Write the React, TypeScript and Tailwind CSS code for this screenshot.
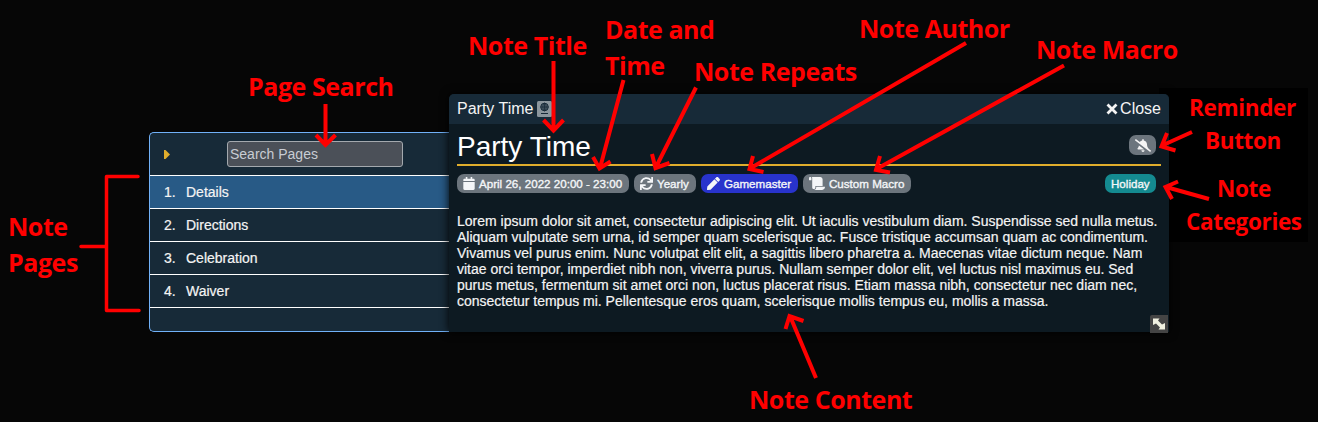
import { FaBellSlash, FaCalendar, FaPen, FaScroll, FaSync } from "react-icons/fa";

const pages = ["Details", "Directions", "Celebration", "Waiver"];

const content = [
  "Lorem ipsum dolor sit amet, consectetur adipiscing elit. Ut iaculis vestibulum diam. Suspendisse sed nulla metus.",
  "Aliquam vulputate sem urna, id semper quam scelerisque ac. Fusce tristique accumsan quam ac condimentum.",
  "Vivamus vel purus enim. Nunc volutpat elit elit, a sagittis libero pharetra a. Maecenas vitae dictum neque. Nam",
  "vitae orci tempor, imperdiet nibh non, viverra purus. Nullam semper dolor elit, vel luctus nisl maximus eu. Sed",
  "purus metus, fermentum sit amet orci non, luctus placerat risus. Etiam massa nibh, consectetur nec diam nec,",
  "consectetur tempus mi. Pellentesque eros quam, scelerisque mollis tempus eu, mollis a massa.",
];

const large = "text-[25px] tracking-[-0.45px]";
const small = "text-[22.5px] tracking-[-0.35px]";

const labels = [
  { text: "Page Search", at: "left-[248px] top-[74px]", size: large },
  { text: "Note Title", at: "left-[468px] top-[33px]", size: large },
  { text: "Date and", at: "left-[605px] top-[17px]", size: large },
  { text: "Time", at: "left-[605px] top-[53px]", size: large },
  { text: "Note Repeats", at: "left-[694px] top-[59px]", size: large },
  { text: "Note Author", at: "left-[859px] top-[16px]", size: large },
  { text: "Note Macro", at: "left-[1036px] top-[37px]", size: large },
  { text: "Reminder", at: "left-[1189px] top-[97px]", size: small },
  { text: "Button", at: "left-[1205px] top-[130px]", size: small },
  { text: "Note", at: "left-[1217px] top-[178px]", size: small },
  { text: "Categories", at: "left-[1186px] top-[211px]", size: small },
  { text: "Note", at: "left-[8px] top-[214px]", size: large },
  { text: "Pages", at: "left-[8px] top-[250px]", size: large },
  { text: "Note Content", at: "left-[749px] top-[387px]", size: large },
];

const arrows = [
  "M325.5 104V145M316 135l9.500 10 10-10",
  "M553.500 61V129M543.500 120l10 10.500 10-10.500",
  "M623.500 80 600 168M593 157l6.500 11.500 11-7",
  "M696 87.500 655.500 168M652 154l3.500 14 14-5",
  "M966 43 750 168.500M753 156l-3.500 13 14 3",
  "M1064 65.500 876.500 169M880 156l-4 14 14 2.500",
  "M1192 132 1161 146M1167 133l-5.500 13.500 14 4",
  "M1209 199 1166 187M1178 181.500l-12.500 5.500 6.500 12",
  "M816 378 790 316M785.500 329l4-13 14 5",
];

function Tag({ children, className }: { children: React.ReactNode; className: string }) {
  return (
    <span className={`flex h-[19px] items-center gap-[4px] rounded-[7px] whitespace-nowrap pl-[6px] text-[11.6px] leading-[19px] text-[#f4f6f8] [-webkit-text-stroke:0.35px_#f4f6f8] ${className}`}>
      {children}
    </span>
  );
}

export default function App() {
  return (
    <div className="relative h-[422px] w-[1318px] overflow-hidden bg-[#060606] font-['Liberation_Sans',Arial,sans-serif] text-[#f4f4f4]">
      <div className="absolute left-[1159px] top-[88px] h-[154px] w-[149px] bg-black" />

      <div className="relative flex items-end pl-[149px] pt-[94px]">
        <aside className="h-[200px] w-[300px] rounded-l-[5px] border border-r-0 border-[#71b1f8] bg-[#172a38]">
          <div className="flex h-[43px] items-center border-b border-white">
            <svg className="ml-[14px] h-[9px] w-[6px] fill-[#e0ad2c]" viewBox="0 0 6 9">
              <path d="M0 0h1.500L6 4.500 1.500 9H0z" />
            </svg>
            <input
              className="ml-[57px] h-[26px] w-[176px] rounded-[3px] border border-[#a4a9ae] bg-[#4b5058] px-[2px] text-[14px] text-white placeholder:text-[#c8ccd3]"
              placeholder="Search Pages"
            />
          </div>
          <ol>
            {pages.map((page, i) => (
              <li
                key={page}
                className={`flex h-[33px] items-center border-b border-white pl-[14px] text-[14px] [-webkit-text-stroke:0.2px_#f4f4f4] ${i === 0 ? "bg-[#285a86]" : ""}`}
              >
                <span className="w-[22px]">{i + 1}.</span>
                {page}
              </li>
            ))}
          </ol>
        </aside>

        <main className="relative h-[238px] w-[720px] rounded-t-[5px] bg-[#0d1a22] shadow-[0_0_10px_#000]">
          <header className="flex h-[30px] items-center rounded-t-[5px] bg-[#172a38] px-2 text-[16px] leading-[28px]">
            <span>Party Time</span>
            <svg className="ml-[4px] h-4 w-[15px]" viewBox="0 0 15 16" fill="none" stroke="#172a38">
              <rect width="15" height="16" rx="1.500" fill="#8b969d" stroke="none" />
              <circle cx="7.500" cy="6" r="3.800" fill="#52616c" />
              <path d="M3.700 6h7.600M7.500 2.200v7.600" strokeWidth="0.800" />
              <ellipse cx="7.500" cy="6" rx="1.700" ry="3.800" strokeWidth="0.700" />
              <path d="M4 12.500h7" />
            </svg>
            <span className="ml-auto flex items-center gap-[2px]">
              <svg className="size-[12px]" viewBox="0 0 12 12" fill="none" stroke="currentColor" strokeWidth="2.800">
                <path d="M1.500 1.500l9 9M10.500 1.500l-9 9" />
              </svg>
              Close
            </span>
          </header>
          <div className="px-2">
            <div className="flex h-[42px] items-center justify-between border-b-2 border-[#e0ad2c]">
              <h1 className="pt-[6px] text-[28px] leading-[40px] text-white">Party Time</h1>
              <button className="mr-[5px] mt-[2px] flex h-5 w-[27px] items-center justify-center rounded-[7px] bg-[#6c757d]">
                <FaBellSlash className="h-[13px] w-[16px]" />
              </button>
            </div>
            <div className="mt-2 flex gap-[5px] pr-[5px]">
              <Tag className="w-[172px] bg-[#6c757d]">
                <FaCalendar className="h-[13px] w-[12px]" />
                April 26, 2022 20:00 - 23:00
              </Tag>
              <Tag className="w-[62px] bg-[#6c757d]">
                <FaSync className="size-[13px]" />
                Yearly
              </Tag>
              <Tag className="w-[97px] bg-[#2833cc]">
                <FaPen className="size-[13px]" />
                Gamemaster
              </Tag>
              <Tag className="w-[108px] bg-[#6c757d]">
                <FaScroll className="h-[13px] w-[16px]" />
                Custom Macro
              </Tag>
              <Tag className="ml-auto w-[51px] bg-[#148a90]">Holiday</Tag>
            </div>
            <p className="mt-5 text-[14px] leading-4 [-webkit-text-stroke:0.2px_#f4f4f4]">
              {content.map((line) => (
                <span key={line} className="block whitespace-nowrap">
                  {line}
                </span>
              ))}
            </p>
          </div>
          <div className="absolute bottom-[-1px] right-px flex size-[18px] items-center justify-center rounded-tl-[2px] bg-[#444]">
            <svg className="size-[12px] fill-[#f0f0e0]" viewBox="0 0 12 12">
              <path d="M0 0.500h6.500L5 2.500 9 6.500l3-1.500v6.500H5.500L7 9.500 3 5.500 0 7z" />
            </svg>
          </div>
        </main>
      </div>

      <svg className="pointer-events-none absolute inset-0" width="1318" height="422" fill="none" stroke="#f00" strokeWidth="4">
        <path d="M138 176.500H106.500V310.500H139M81 246.500H106" strokeLinecap="round" strokeLinejoin="round" strokeWidth="3.500" />
        {arrows.map((d) => (
          <path key={d} d={d} />
        ))}
      </svg>
      {labels.map(({ text, at, size }) => (
        <span
          key={at}
          className={`absolute whitespace-nowrap font-['Open_Sans','Noto_Sans',sans-serif] font-bold leading-none text-[#f00] ${size} ${at}`}
        >
          {text}
        </span>
      ))}
    </div>
  );
}
